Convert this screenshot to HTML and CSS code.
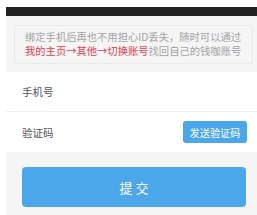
FILE: index.html
```html
<!DOCTYPE html>
<html lang="zh">
<head>
<meta charset="utf-8">
<link rel="stylesheet" href="styles.css">
</head>
<body>
<div class="page">
  <div class="topbar"></div>
  <div class="notice">
    <div class="notice-box">
      <p>绑定手机后再也不用担心ID丢失，随时可以通过</p>
      <p><span class="hl">我的主页→其他→切换账号</span>找回自己的钱咖账号</p>
    </div>
  </div>
  <div class="form">
    <div class="row"><span class="label">手机号</span></div>
    <div class="sep"></div>
    <div class="row"><span class="label">验证码</span><button class="send">发送验证码</button></div>
  </div>
  <div class="footer">
    <button class="submit">提 交</button>
  </div>
</div>
</body>
</html>
```
FILE: styles.css
```css
html, body { margin: 0; padding: 0; background: #fff; }
body { font-family: "Noto Sans CJK SC", "Noto Sans", sans-serif; }
.page { padding: 7px 0 0 6px; }
.topbar { height: 9px; background: #222; }
.notice { background: #f5f5f6; padding: 9px 4px 8px 8px; }
.notice-box {
  border: 1px solid #e9e9ea;
  border-radius: 3px;
  padding: 4px 6px 5px 10px;
}
.notice-box p {
  margin: 0;
  font-size: 10.3px;
  line-height: 14px;
  color: #a3a3a3;
  white-space: nowrap;
}
.hl { color: #e2404f; }
.form { background: #fff; }
.row {
  height: 39px;
  display: flex;
  align-items: center;
  justify-content: space-between;
  padding: 0 10px 0 16px;
}
.row + .sep + .row { height: 40px; }
.sep { height: 1px; background: #f1f1f1; }
.label { font-size: 10.5px; color: #555; }
.send {
  width: 64px; height: 22px;
  border: 0; border-radius: 3px;
  background: #4ba6ea; color: #fff;
  font-family: inherit; font-size: 10.2px;
  padding: 0;
}
.footer { background: #f5f5f6; padding: 15px 11px 9px 16px; }
.submit {
  display: block; width: 224px; height: 40px;
  border: 0; border-radius: 4px;
  background: #4ba6ea; color: #fff;
  font-family: inherit; font-size: 13px;
  padding: 0;
}
```
